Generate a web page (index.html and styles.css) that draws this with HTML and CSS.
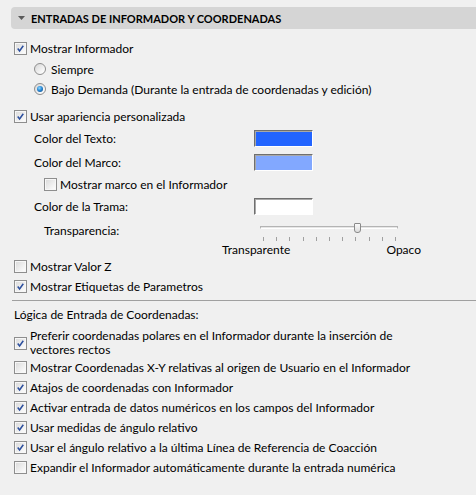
FILE: index.html
```html
<!DOCTYPE html>
<html lang="es">
<head>
    <meta charset="UTF-8">
    <meta name="viewport" content="width=device-width, initial-scale=1.0">
    <title>Entradas de Informador y Coordenadas</title>
    <link rel="stylesheet" href="styles.css">
</head>
<body>
    <div class="panel">
        <!-- Section header -->
        <div class="section-header">
            <svg class="caret" width="7" height="4" viewBox="0 0 7 4"><path d="M0 0 H7 L3.5 4 Z" fill="#5a5a5a"/></svg>
            <span>ENTRADAS DE INFORMADOR Y COORDENADAS</span>
        </div>

        <div class="options">
            <div class="row first">
                <span class="cb checked"><svg viewBox="0 0 13 13"><path d="M3.2 6.6 L5.4 9.4 L9.8 3.2"/></svg></span>
                Mostrar Informador
            </div>
            <div class="row radio-row first-radio">
                <span class="radio"></span>
                Siempre
            </div>
            <div class="row radio-row">
                <span class="radio selected"></span>
                Bajo Demanda (Durante la entrada de coordenadas y edición)
            </div>

            <div class="row spaced">
                <span class="cb checked"><svg viewBox="0 0 13 13"><path d="M3.2 6.6 L5.4 9.4 L9.8 3.2"/></svg></span>
                Usar apariencia personalizada
            </div>

            <!-- Custom appearance -->
            <div class="color-row">
                <span class="color-label">Color del Texto:</span>
                <span class="swatch swatch-text"></span>
            </div>
            <div class="color-row">
                <span class="color-label">Color del Marco:</span>
                <span class="swatch swatch-frame"></span>
            </div>
            <div class="row sub-row">
                <span class="cb"></span>
                Mostrar marco en el Informador
            </div>
            <div class="color-row">
                <span class="color-label">Color de la Trama:</span>
                <span class="swatch swatch-fill"></span>
            </div>

            <div class="slider-row">
                <span class="slider-label">Transparencia:</span>
                <div class="slider">
                    <div class="track"></div>
                    <div class="thumb"></div>
                    <div class="ticks">
                        <i></i><i></i><i></i><i></i><i></i><i></i><i></i><i></i><i></i><i></i><i></i>
                    </div>
                </div>
            </div>
            <div class="slider-ends">
                <span>Transparente</span>
                <span>Opaco</span>
            </div>

            <div class="row">
                <span class="cb"></span>
                Mostrar Valor Z
            </div>
            <div class="row">
                <span class="cb checked"><svg viewBox="0 0 13 13"><path d="M3.2 6.6 L5.4 9.4 L9.8 3.2"/></svg></span>
                Mostrar Etiquetas de Parametros
            </div>

            <div class="separator"></div>

            <!-- Coordinate input logic -->
            <div class="group-title">Lógica de Entrada de Coordenadas:</div>

            <div class="row multi-row">
                <span class="cb checked"><svg viewBox="0 0 13 13"><path d="M3.2 6.6 L5.4 9.4 L9.8 3.2"/></svg></span>
                <span class="multi-text">Preferir coordenadas polares en el Informador durante la inserción de<br>vectores rectos</span>
            </div>
            <div class="row">
                <span class="cb"></span>
                Mostrar Coordenadas X-Y relativas al origen de Usuario en el Informador
            </div>
            <div class="row">
                <span class="cb checked"><svg viewBox="0 0 13 13"><path d="M3.2 6.6 L5.4 9.4 L9.8 3.2"/></svg></span>
                Atajos de coordenadas con Informador
            </div>
            <div class="row">
                <span class="cb checked"><svg viewBox="0 0 13 13"><path d="M3.2 6.6 L5.4 9.4 L9.8 3.2"/></svg></span>
                Activar entrada de datos numéricos en los campos del Informador
            </div>
            <div class="row">
                <span class="cb checked"><svg viewBox="0 0 13 13"><path d="M3.2 6.6 L5.4 9.4 L9.8 3.2"/></svg></span>
                Usar medidas de ángulo relativo
            </div>
            <div class="row">
                <span class="cb checked"><svg viewBox="0 0 13 13"><path d="M3.2 6.6 L5.4 9.4 L9.8 3.2"/></svg></span>
                Usar el ángulo relativo a la última Línea de Referencia de Coacción
            </div>
            <div class="row">
                <span class="cb"></span>
                Expandir el Informador automáticamente durante la entrada numérica
            </div>
        </div>
    </div>
</body>
</html>
```

FILE: styles.css
```css
:root {
    --bg-color: #f0f0f0;
    --header-color: #d5d5d5;
    --text-color: #000;
    --box-border: #8e8e8e;
    --check-color: #2c4f9e;
}

* {
    box-sizing: border-box;
    margin: 0;
    padding: 0;
}

body {
    font-family: 'Lato', 'Liberation Sans', sans-serif;
    font-size: 12px;
    line-height: 13px;
    color: var(--text-color);
    background-color: var(--bg-color);
}

.panel {
    padding: 7px 0 0 11px;
}

.section-header {
    height: 22px;
    display: flex;
    align-items: center;
    gap: 6px;
    padding-left: 7px;
    background-color: var(--header-color);
    border-radius: 4px 0 0 4px;
    font-weight: 700;
    font-size: 11px;
}

.caret {
    display: block;
}

.options {
    padding-left: 3px;
}

.row {
    height: 20px;
    display: flex;
    align-items: center;
    white-space: nowrap;
}

.row.first {
    margin-top: 9px;
}

.row.first-radio {
    margin-top: 1px;
}

.row.spaced {
    margin-top: 7px;
}

.radio-row {
    padding-left: 20px;
}

.sub-row {
    padding-left: 30px;
}

/* checkbox */
.cb {
    width: 13px;
    height: 13px;
    margin-right: 3px;
    flex-shrink: 0;
    border: 1px solid var(--box-border);
    background: linear-gradient(135deg, #d9d9d9 0%, #f4f4f4 70%, #fff 100%);
    box-shadow: inset 0 0 0 1px #f7f7f7;
}

.cb svg {
    display: block;
    width: 11px;
    height: 11px;
}

.cb svg path {
    fill: none;
    stroke: var(--check-color);
    stroke-width: 1.8;
}

/* radio */
.radio {
    width: 12px;
    height: 12px;
    margin-right: 5px;
    flex-shrink: 0;
    border-radius: 50%;
    border: 1px solid var(--box-border);
    background: linear-gradient(135deg, #d6d6d6 0%, #f6f6f6 70%, #fff 100%);
    display: flex;
    align-items: center;
    justify-content: center;
}

.radio.selected::after {
    content: "";
    width: 6px;
    height: 6px;
    border-radius: 50%;
    background: radial-gradient(circle at 40% 35%, #8fd8ff 0%, #2a8ad6 45%, #0b3f7a 100%);
}

/* colour swatches */
.color-row {
    height: 24px;
    display: grid;
    grid-template-columns: 220px 59px;
    align-items: center;
    padding-left: 20px;
}

.swatch {
    height: 17px;
    border: 1px solid;
    border-color: #6f6f6f #fff #fff #6f6f6f;
    box-shadow: inset 1px 1px 0 #a8a8a8;
}

.swatch-text {
    background-color: #2264ff;
}

.swatch-frame {
    background-color: #82a8ff;
}

.swatch-fill {
    background-color: #fff;
}

/* transparency slider */
.slider-row {
    height: 24px;
    display: grid;
    grid-template-columns: 216px 138px;
    align-items: center;
    padding-left: 30px;
}

.slider {
    position: relative;
    height: 24px;
}

.track {
    margin-top: 8px;
    height: 3px;
    border: 1px solid #b4b4b4;
    border-bottom-color: #fff;
    background: #e6e6e6;
}

.thumb {
    position: absolute;
    left: 94px;
    top: 5px;
    width: 7px;
    height: 10px;
    border: 1px solid #8a8a8a;
    border-radius: 1px 1px 3px 3px;
    background: linear-gradient(#fafafa, #dcdcdc);
}

.ticks {
    margin-top: 8px;
    padding: 0 2px 0 3px;
    display: flex;
    justify-content: space-between;
}

.ticks i {
    width: 1px;
    height: 4px;
    background: #a0a0a0;
}

.slider-ends {
    height: 14px;
    width: 199px;
    margin-left: 208px;
    display: flex;
    justify-content: space-between;
    align-items: center;
}

.separator {
    margin: 4px 0 0 -2px;
    height: 1px;
    background: #a0a0a0;
}

.group-title {
    height: 20px;
    margin-top: 3px;
    display: flex;
    align-items: center;
}

.multi-row {
    height: 33px;
    padding-top: 5px;
    align-items: center;
}

.multi-text {
    line-height: 14px;
}
```
